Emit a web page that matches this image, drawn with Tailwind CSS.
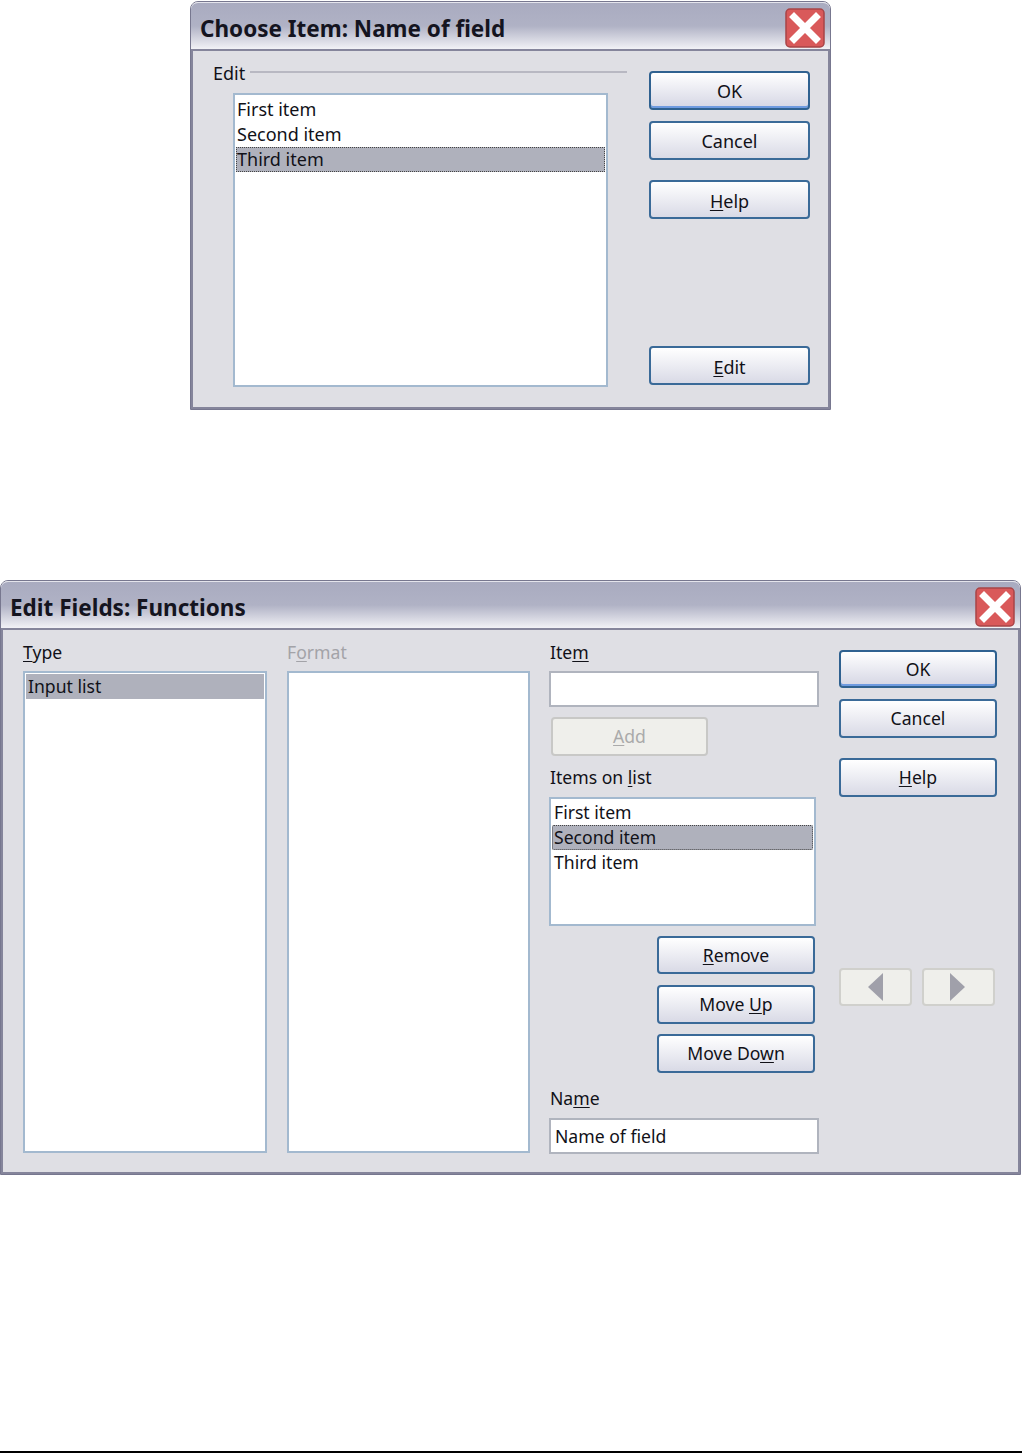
<!DOCTYPE html>
<html lang="en">
<head>
<meta charset="utf-8">
<title>Dialogs</title>
<script src="https://cdn.jsdelivr.net/npm/@tailwindcss/browser@4"></script>
</head>
<body class="bg-white font-['Noto_Sans','Open_Sans',sans-serif] text-[18px] leading-[25px] text-[#111118]">
<div class="w-[1022px] h-[1453px] flex flex-col border-b-2 border-black">

  <!-- Choose Item dialog -->
  <section class="ml-[190px] mt-[1px] w-[641px] h-[409px] flex flex-col rounded-t-[8px] border border-[#77778f] bg-[#dfdfe4]">
    <header class="h-[49px] shrink-0 flex items-center justify-between pl-[9px] pr-[5px] pt-[4px] rounded-t-[7px] bg-gradient-to-b from-[#a9abc0] via-[#b0b2c5] to-[#f2f2f6] border-t border-t-[#e4e4ec] border-b-2 border-b-[#85859b]">
      <h1 class="text-[22.5px] font-bold text-[#141420]">Choose Item: Name of field</h1>
      <svg class="w-[40px] h-[40px]" viewBox="0 0 40 40"><rect x="1" y="1" width="38" height="38" rx="4" fill="#d9595a" stroke="#a84447" stroke-width="1.5"/><path d="M9 9 L31 31 M31 9 L9 31" stroke="#fff" stroke-width="7" stroke-linecap="square"/></svg>
    </header>
    <div class="flex-1 flex border-x-2 border-b-2 border-[#85859b] pl-[20px]">
      <div class="w-[414px] shrink-0">
        <div class="flex items-center gap-[5px] mt-[10px] h-[25px]">
          <span>Edit</span>
          <span class="flex-1 h-[2px] mt-[-3px] bg-[#b8b8c2]"></span>
        </div>
        <ul class="ml-[20px] mt-[7px] w-[375px] h-[294px] bg-white border-2 border-[#a3b9cf] px-[1px] pt-[2px]">
          <li class="pl-[1px] h-[25px]">First item</li>
          <li class="pl-[1px] h-[25px]">Second item</li>
          <li class="pl-[1px] h-[25px] bg-[#afb1bc] outline-1 -outline-offset-1 outline-dotted outline-[#444]">Third item</li>
        </ul>
      </div>
      <div class="ml-[22px] w-[161px] shrink-0 flex flex-col pt-[20px] h-full">
        <button class="h-[39px] w-full pt-[2px] rounded-[4px] border-2 border-[#2f6190] bg-gradient-to-b from-white to-[#d5d6e4] shadow-[inset_0_-2px_0_#6f9be0]">OK</button>
        <button class="h-[39px] w-full pt-[2px] mt-[11px] rounded-[4px] border-2 border-[#3a6a98] bg-gradient-to-b from-white to-[#d9dae6]">Cancel</button>
        <button class="h-[39px] w-full pt-[4px] mt-[20px] rounded-[4px] border-2 border-[#3a6a98] bg-gradient-to-b from-white to-[#d9dae6]"><u class="underline-offset-2">H</u>elp</button>
        <button class="h-[39px] w-full pt-[4px] mt-[127px] rounded-[4px] border-2 border-[#3a6a98] bg-gradient-to-b from-white to-[#d9dae6]"><u class="underline-offset-2">E</u>dit</button>
      </div>
    </div>
  </section>

  <!-- Edit Fields dialog -->
  <section class="ml-[0px] mt-[170px] w-[1021px] h-[595px] flex flex-col rounded-t-[8px] border border-[#77778f] bg-[#dfdfe4] text-[17.6px]">
    <header class="h-[49px] shrink-0 flex items-center justify-between pl-[9px] pr-[5px] pt-[4px] rounded-t-[7px] bg-gradient-to-b from-[#a9abc0] via-[#b0b2c5] to-[#f2f2f6] border-t border-t-[#e4e4ec] border-b-2 border-b-[#85859b]">
      <h1 class="text-[22.5px] font-bold text-[#141420]">Edit Fields: Functions</h1>
      <svg class="w-[40px] h-[40px]" viewBox="0 0 40 40"><rect x="1" y="1" width="38" height="38" rx="4" fill="#d9595a" stroke="#a84447" stroke-width="1.5"/><path d="M9 9 L31 31 M31 9 L9 31" stroke="#fff" stroke-width="7" stroke-linecap="square"/></svg>
    </header>
    <div class="flex-1 flex border-x-2 border-b-2 border-[#85859b] pl-[20px] pt-[10px]">
      <div class="w-[244px] shrink-0 flex flex-col">
        <div class="h-[25px]"><u class="underline-offset-2">T</u>ype</div>
        <ul class="mt-[6px] h-[482px] bg-white border-2 border-[#a3b9cf] px-[1px] pt-[1px]">
          <li class="pl-[2px] h-[25px] bg-[#afb1bc]">Input list</li>
        </ul>
      </div>
      <div class="ml-[20px] w-[243px] shrink-0 flex flex-col">
        <div class="h-[25px] text-[#a3a3a8]">F<u class="underline-offset-2">o</u>rmat</div>
        <div class="mt-[6px] h-[482px] bg-white border-2 border-[#a3b9cf]"></div>
      </div>
      <div class="ml-[19px] w-[270px] shrink-0 flex flex-col">
        <div class="h-[25px] pl-[1px]">Ite<u class="underline-offset-2">m</u></div>
        <div class="mt-[6px] h-[36px] bg-white border-2 border-[#b0b4be]"></div>
        <button class="mt-[10px] ml-[2px] h-[39px] w-[157px] rounded-[4px] border-2 border-[#c8c8c6] bg-[#efefeb] text-[#aaaaaa]"><u class="underline-offset-2">A</u>dd</button>
        <div class="mt-[9px] h-[25px] pl-[1px]">Items on <u class="underline-offset-2">l</u>ist</div>
        <ul class="mt-[7px] w-[267px] h-[129px] bg-white border-2 border-[#a3b9cf] px-[1px] pt-[1px]">
          <li class="pl-[2px] h-[25px]">First item</li>
          <li class="pl-[2px] h-[25px] bg-[#afb1bc] outline-1 -outline-offset-1 outline-dotted outline-[#444] rounded-[2px]">Second item</li>
          <li class="pl-[2px] h-[25px]">Third item</li>
        </ul>
        <div class="ml-[108px] w-[158px] flex flex-col">
          <button class="mt-[10px] h-[38px] rounded-[4px] border-2 border-[#3a6a98] bg-gradient-to-b from-white to-[#d9dae6]"><u class="underline-offset-2">R</u>emove</button>
          <button class="mt-[11px] h-[39px] rounded-[4px] border-2 border-[#3a6a98] bg-gradient-to-b from-white to-[#d9dae6]">Move <u class="underline-offset-2">U</u>p</button>
          <button class="mt-[10px] h-[39px] rounded-[4px] border-2 border-[#3a6a98] bg-gradient-to-b from-white to-[#d9dae6]">Move Do<u class="underline-offset-2">w</u>n</button>
        </div>
        <div class="mt-[13px] h-[25px] pl-[1px]">Na<u class="underline-offset-2">m</u>e</div>
        <div class="mt-[7px] h-[36px] bg-white border-2 border-[#b0b4be] px-[4px] leading-[32px]">Name of field</div>
      </div>
      <div class="ml-[20px] w-[158px] shrink-0 flex flex-col pt-[10px]">
        <button class="h-[38px] rounded-[4px] border-2 border-[#2f6190] bg-gradient-to-b from-white to-[#d5d6e4] shadow-[inset_0_-2px_0_#6f9be0]">OK</button>
        <button class="h-[39px] mt-[11px] rounded-[4px] border-2 border-[#3a6a98] bg-gradient-to-b from-white to-[#d9dae6]">Cancel</button>
        <button class="h-[39px] mt-[20px] rounded-[4px] border-2 border-[#3a6a98] bg-gradient-to-b from-white to-[#d9dae6]"><u class="underline-offset-2">H</u>elp</button>
        <div class="mt-[171px] flex gap-[10px]">
          <button class="w-[73px] h-[38px] shrink-0 rounded-[4px] border-2 border-[#d0d0cc] bg-[#efefeb] flex items-center justify-center"><svg class="w-[16px] h-[28px]" viewBox="0 0 16 28"><path d="M15 0 V28 L0 14 Z" fill="#a0a0aa"/></svg></button>
          <button class="w-[73px] h-[38px] shrink-0 pr-[3px] rounded-[4px] border-2 border-[#d0d0cc] bg-[#efefeb] flex items-center justify-center"><svg class="w-[16px] h-[28px]" viewBox="0 0 16 28"><path d="M1 0 V28 L16 14 Z" fill="#a0a0aa"/></svg></button>
        </div>
      </div>
    </div>
  </section>
</div>
</body>
</html>
